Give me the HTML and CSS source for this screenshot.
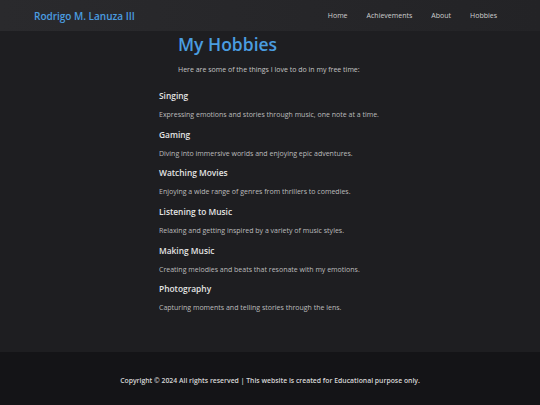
FILE: index.html
```html
<!DOCTYPE html>
<html lang="en">
<head>
<meta charset="utf-8">
<title>My Hobbies</title>
<link rel="stylesheet" href="styles.css">
</head>
<body>
<header class="site-header">
  <div class="logo">Rodrigo M. Lanuza III</div>
  <nav class="nav">
    <a href="#">Home</a>
    <a href="#">Achievements</a>
    <a href="#">About</a>
    <a href="#">Hobbies</a>
  </nav>
</header>
<main class="content">
  <section class="intro">
    <h1>My Hobbies</h1>
    <p>Here are some of the things I love to do in my free time:</p>
  </section>
  <section class="hobby">
    <h3>Singing</h3>
    <p>Expressing emotions and stories through music, one note at a time.</p>
  </section>
  <section class="hobby">
    <h3>Gaming</h3>
    <p>Diving into immersive worlds and enjoying epic adventures.</p>
  </section>
  <section class="hobby">
    <h3>Watching Movies</h3>
    <p>Enjoying a wide range of genres from thrillers to comedies.</p>
  </section>
  <section class="hobby">
    <h3>Listening to Music</h3>
    <p>Relaxing and getting inspired by a variety of music styles.</p>
  </section>
  <section class="hobby">
    <h3>Making Music</h3>
    <p>Creating melodies and beats that resonate with my emotions.</p>
  </section>
  <section class="hobby">
    <h3>Photography</h3>
    <p>Capturing moments and telling stories through the lens.</p>
  </section>
</main>
<footer class="site-footer">
  <p>Copyright © 2024 All rights reserved | This website is created for Educational purpose only.</p>
</footer>
</body>
</html>
```

FILE: styles.css
```css
* { box-sizing: border-box; }
html, body { margin: 0; padding: 0; }
body {
  background: #1e1e21;
  font-family: "Open Sans", "DejaVu Sans", sans-serif;
  color: #bdbdbd;
  width: 540px;
  min-height: 405px;
  display: flex;
  flex-direction: column;
}
.site-header {
  height: 31px;
  background: linear-gradient(90deg, #2a2a2d 0%, #232326 100%);
  display: flex;
  align-items: center;
  justify-content: space-between;
  padding: 0 43px 0 34px;
}
.logo {
  color: #4a9de0;
  font-size: 10px;
  font-weight: 600;
}
.nav { display: flex; gap: 19px; }
.nav a {
  color: #cfcfcf;
  text-decoration: none;
  font-size: 7px;
}
.content {
  width: 222px;
  margin: 0 auto;
  flex: 1;
  padding-top: 1px;
}
.intro { padding: 0 19px; }
.intro h1 {
  margin: 0;
  color: #4a9de0;
  font-size: 17.5px;
  font-weight: 600;
  line-height: 24px;
}
.intro p {
  margin: 8px 0 13px;
  font-size: 7px;
  line-height: 12px;
  color: #c4c4c4;
}
.hobby { height: 38.7px; }
.hobby h3 {
  margin: 0;
  font-size: 8.4px;
  font-weight: 600;
  line-height: 14px;
  color: #e4e4e4;
}
.hobby p {
  margin: 6px 0 0;
  font-size: 7px;
  line-height: 12px;
  color: #bcbcbc;
}
.site-footer {
  background: #141417;
  height: 53px;
  padding-top: 4px;
  display: flex;
  align-items: center;
  justify-content: center;
}
.site-footer p {
  margin: 0;
  font-size: 6.85px;
  font-weight: 600;
  color: #d6d6d6;
}
```
